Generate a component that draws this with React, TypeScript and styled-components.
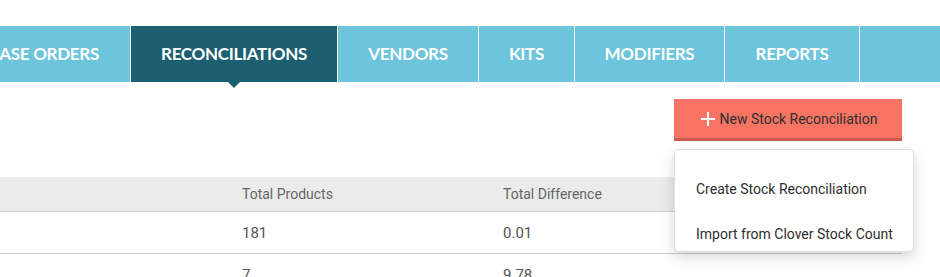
import React from 'react';
import styled, { createGlobalStyle } from 'styled-components';

const GlobalStyle = createGlobalStyle`
  body {
    margin: 0;
    background: #fff;
    font-family: Roboto, "Liberation Sans", sans-serif;
    overflow: hidden;
  }
`;

const Page = styled.div`
  width: 940px;
  padding-top: 26px;
`;

const Nav = styled.nav`
  display: flex;
  height: 56px;
  background: #6cc4dd;
`;

const Tab = styled.div<{ $width: number; $active?: boolean; $clipped?: boolean }>`
  position: relative;
  box-sizing: border-box;
  flex: none;
  width: ${(p) => p.$width}px;
  display: flex;
  align-items: center;
  justify-content: ${(p) => (p.$clipped ? 'flex-end' : 'center')};
  padding-right: ${(p) => (p.$clipped ? '31px' : '0')};
  padding-bottom: 2px;
  overflow: ${(p) => (p.$clipped ? 'hidden' : 'visible')};
  white-space: nowrap;
  border-right: 1px solid #fff;
  background: ${(p) => (p.$active ? '#1c5f71' : '#6cc4dd')};
  color: #fff;
  font-family: Lato, "Open Sans", sans-serif;
  font-weight: 700;
  font-size: 17px;
  letter-spacing: -0.3px;

  ${(p) =>
    p.$active &&
    `
    &::after {
      content: '';
      position: absolute;
      left: 50%;
      bottom: -6px;
      margin-left: -6px;
      border-left: 6px solid transparent;
      border-right: 6px solid transparent;
      border-top: 6px solid #1c5f71;
    }
  `}
`;

const Toolbar = styled.div`
  position: relative;
  display: flex;
  justify-content: flex-end;
  padding-right: 38px;
  margin-top: 17px;
`;

const AddButton = styled.button`
  box-sizing: border-box;
  width: 228px;
  height: 42px;
  display: flex;
  align-items: center;
  justify-content: center;
  gap: 5px;
  padding: 0 0 0 2px;
  border: none;
  border-bottom: 3px solid #c9594b;
  background: #f77464;
  color: #2e2e2e;
  font-family: Roboto, "Liberation Sans", sans-serif;
  font-size: 14px;
  cursor: pointer;
`;

const Menu = styled.div`
  position: absolute;
  top: 50px;
  right: 26px;
  z-index: 2;
  box-sizing: border-box;
  width: 240px;
  height: 103px;
  padding-top: 21px;
  display: flex;
  flex-direction: column;
  gap: 10px;
  background: #fff;
  border: 1px solid #dcdcdc;
  border-radius: 4px;
  box-shadow: 0 5px 14px rgba(0, 0, 0, 0.16);
`;

const MenuItem = styled.div`
  height: 36px;
  display: flex;
  align-items: center;
  padding-left: 21px;
  font-size: 14px;
  color: #2e2e2e;
`;

const Table = styled.div`
  width: 902px;
  margin-top: 36px;
`;

const Row = styled.div<{ $head?: boolean }>`
  display: grid;
  grid-template-columns: 242px 261px 1fr;
  align-items: center;
  height: ${(p) => (p.$head ? '34px' : '41px')};
  background: ${(p) => (p.$head ? '#ebebeb' : '#fff')};
  border-bottom: 1px solid #cdcdcd;
  font-size: ${(p) => (p.$head ? '14px' : '15px')};
  color: ${(p) => (p.$head ? '#666' : '#555')};
`;

const Cell = styled.div``;

const PlusIcon = () => (
  <svg width="14" height="14" viewBox="0 0 14 14">
    <path d="M7 0v14M0 7h14" stroke="#fff" strokeWidth="2" />
  </svg>
);

const tabs = [
  { label: 'PURCHASE ORDERS', width: 131, clipped: true },
  { label: 'RECONCILIATIONS', width: 207, active: true },
  { label: 'VENDORS', width: 141 },
  { label: 'KITS', width: 96 },
  { label: 'MODIFIERS', width: 150 },
  { label: 'REPORTS', width: 135 },
];

const rows = [
  { products: '181', difference: '0.01' },
  { products: '7', difference: '9.78' },
];

const App = () => {
  return (
    <Page>
      <GlobalStyle />
      <Nav>
        {tabs.map((t) => (
          <Tab key={t.label} $width={t.width} $active={t.active} $clipped={t.clipped}>
            {t.label}
          </Tab>
        ))}
      </Nav>
      <Toolbar>
        <AddButton>
          <PlusIcon />
          New Stock Reconciliation
        </AddButton>
        <Menu>
          <MenuItem>Create Stock Reconciliation</MenuItem>
          <MenuItem>Import from Clover Stock Count</MenuItem>
        </Menu>
      </Toolbar>
      <Table>
        <Row $head>
          <Cell />
          <Cell>Total Products</Cell>
          <Cell>Total Difference</Cell>
        </Row>
        {rows.map((r, i) => (
          <Row key={i}>
            <Cell />
            <Cell>{r.products}</Cell>
            <Cell>{r.difference}</Cell>
          </Row>
        ))}
      </Table>
    </Page>
  );
};

export default App;
